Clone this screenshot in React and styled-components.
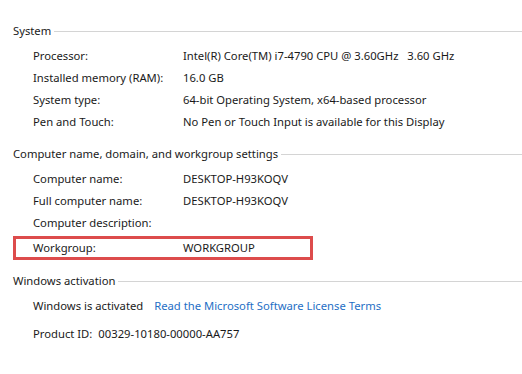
import React from 'react';
import styled, { createGlobalStyle } from 'styled-components';

const GlobalStyle = createGlobalStyle`
  html, body {
    margin: 0;
    padding: 0;
    background: #ffffff;
  }
  body {
    font-family: "Noto Sans", "Open Sans", sans-serif;
    font-size: 11.25px;
    color: #1a1a1a;
  }
`;

const Page = styled.div`
  width: 522px;
  height: 374px;
  padding-top: 22px;
  box-sizing: border-box;
  overflow: hidden;
`;

const Section = styled.section`
  margin-bottom: ${props => props.gap || 0}px;
`;

const Header = styled.div`
  display: flex;
  align-items: center;
  height: 16px;
  padding-left: 13px;
  margin-bottom: 6px;

  &::after {
    content: "";
    flex: 1;
    height: 1px;
    margin-left: 3px;
    margin-top: 2px;
    background: #d4d4d4;
  }
`;

const Row = styled.div`
  display: flex;
  align-items: center;
  height: 22px;
  padding-left: 33px;
`;

const Label = styled.span`
  width: 150px;
  white-space: nowrap;
`;

const Value = styled.span`
  white-space: pre;
`;

const Highlight = styled.div`
  display: flex;
  align-items: center;
  width: 300px;
  height: 24px;
  margin: 3px 0 0 13px;
  padding: 0 0 2px 17px;
  border: 3px solid #dd4c4c;
  box-sizing: border-box;
`;

const Link = styled.a`
  color: #1f6fc5;
  text-decoration: none;
  margin-left: 11px;
  cursor: pointer;
`;

const ProductRow = styled(Row)`
  margin-top: 6px;
`;

const ProductValue = styled.span`
  margin-left: 6px;
`;

const systemRows = [
  ['Processor:', 'Intel(R) Core(TM) i7-4790 CPU @ 3.60GHz   3.60 GHz'],
  ['Installed memory (RAM):', '16.0 GB'],
  ['System type:', '64-bit Operating System, x64-based processor'],
  ['Pen and Touch:', 'No Pen or Touch Input is available for this Display'],
];

const nameRows = [
  ['Computer name:', 'DESKTOP-H93KOQV'],
  ['Full computer name:', 'DESKTOP-H93KOQV'],
  ['Computer description:', ''],
];

const App = () => {
  return (
    <Page>
      <GlobalStyle />
      <Section gap={13}>
        <Header>System</Header>
        {systemRows.map(([label, value]) => (
          <Row key={label}>
            <Label>{label}</Label>
            <Value>{value}</Value>
          </Row>
        ))}
      </Section>

      <Section gap={12}>
        <Header>Computer name, domain, and workgroup settings</Header>
        {nameRows.map(([label, value]) => (
          <Row key={label}>
            <Label>{label}</Label>
            <Value>{value}</Value>
          </Row>
        ))}
        <Highlight>
          <Label>Workgroup:</Label>
          <Value>WORKGROUP</Value>
        </Highlight>
      </Section>

      <Section>
        <Header>Windows activation</Header>
        <Row>
          <span>Windows is activated</span>
          <Link>Read the Microsoft Software License Terms</Link>
        </Row>
        <ProductRow>
          <span>Product ID:</span>
          <ProductValue>00329-10180-00000-AA757</ProductValue>
        </ProductRow>
      </Section>
    </Page>
  );
};

export default App;
